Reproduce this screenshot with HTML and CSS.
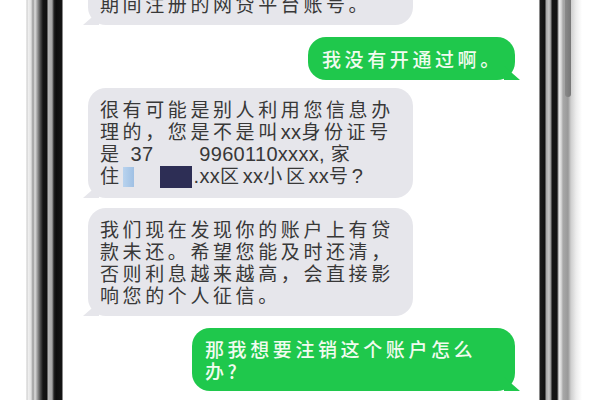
FILE: index.html
```html
<!DOCTYPE html>
<html lang="zh">
<head>
<meta charset="utf-8">
<title>聊天</title>
<link rel="stylesheet" href="styles.css">
</head>
<body>
<div class="phone">
  <div class="bezel-left"></div>
  <div class="screen">
    <div class="msg in first">期间注册的网贷平台账号。</div>
    <div class="msg out short">我没有开通过啊。</div>
    <div class="msg in">很有可能是别人利用您信息办<br>理的，您是不是叫<span class="lat">xx</span>身份证号<br>是 <span class="lat">37</span><span class="gap"></span><span class="lat">9960110xxxx, </span>家<br>住<span class="blue"></span><span class="gap2"></span><span class="navy"></span><span class="lat">.xx</span>区<span class="lat">xx</span>小区<span class="lat">xx</span>号<span class="lat">?</span></div>
    <div class="msg in">我们现在发现你的账户上有贷<br>款未还。希望您能及时还清，<br>否则利息越来越高，会直接影<br>响您的个人征信。</div>
    <div class="msg out wide">那我想要注销这个账户怎么<br>办?</div>
  </div>
  <div class="bezel-right"><div class="button"></div></div>
</div>
</body>
</html>
```
FILE: styles.css
```css
html, body {
  margin: 0;
  padding: 0;
  background: #fff;
}
body {
  width: 600px;
  height: 400px;
  overflow: hidden;
  font-family: "Noto Sans CJK SC", "Noto Sans", sans-serif;
}
.phone {
  display: flex;
  height: 400px;
}
.bezel-left {
  width: 63px;
  flex: none;
  background: linear-gradient(to right,
    #fff 0, #fff 26px, #c8c8c8 27px, #f0f0f0 28px, #e2e2e2 31px, #9a9a9a 33px,
    #dcdcdc 35px, #8a8a8a 38px, #555 40px, #151515 43px, #101010 47px,
    #b8b8b8 48px, #a5a5a5 52px, #202020 54px, #0c0c0c 56px, #151515 62px, #fff 63px);
}
.bezel-right {
  width: 62px;
  flex: none;
  position: relative;
  background: linear-gradient(to right,
    #fff 0, #fafafa 1px, #1a1a1a 2px, #0e0e0e 7px, #a0a0a0 8px, #c4c4c4 11px,
    #8a8a8a 13px, #141414 14px, #101010 19px, #e6e6e6 21px, #dcdcdc 23px,
    #a8a8a8 25px, #999 30px, #cfcfcf 33px, #ececec 38px, #fff 44px);
}
.button {
  position: absolute;
  left: 27px;
  top: 0;
  width: 6px;
  height: 97px;
  background: linear-gradient(to right, #8a8a8a, #777);
  border-radius: 0 0 3px 3px;
}
.screen {
  flex: 1;
  display: flex;
  flex-direction: column;
  background: #fff;
  overflow: hidden;
}
.msg {
  position: relative;
  box-sizing: border-box;
  font-size: 19px;
  line-height: 22px;
  letter-spacing: 3.6px;
  white-space: nowrap;
  border-radius: 18px;
}
.lat {
  font-family: "Liberation Sans", "DejaVu Sans", sans-serif;
  font-size: 20px;
  line-height: 1;
  letter-spacing: 0.3px;
}
.msg.in {
  align-self: flex-start;
  margin-left: 25px;
  width: 325px;
  padding: 10px 10px 10px 12px;
  background: #e6e6eb;
  color: #383838;
  margin-top: 10px;
}
.msg.in::after {
  content: "";
  position: absolute;
  left: -5px;
  bottom: 0;
  width: 16px;
  height: 14px;
  background: #e6e6eb;
  clip-path: polygon(0 100%, 100% 0, 100% 100%);
}
.msg.first {
  margin-top: -17px;
}
.msg.out {
  align-self: flex-end;
  margin-right: 23px;
  background: #1fc84c;
  color: #f1fbef;
  font-weight: 500;
}
.msg.out::after {
  content: "";
  position: absolute;
  right: -5px;
  bottom: 0;
  width: 16px;
  height: 14px;
  background: #1fc84c;
  clip-path: polygon(100% 100%, 0 0, 0 100%);
}
.msg.short {
  margin-top: 12px;
  width: 207px;
  padding: 11px 10px 10px 14px;
}
.msg.short + .msg.in {
  margin-top: 8px;
}
.msg.wide {
  margin-top: 12px;
  width: 323px;
  padding: 10px 10px 9px 13px;
}
.gap {
  display: inline-block;
  width: 46px;
}
.blue {
  display: inline-block;
  width: 11px;
  height: 20px;
  vertical-align: -4px;
  background: linear-gradient(to right, #b9d3ee, #9fc0e4);
}
.gap2 {
  display: inline-block;
  width: 26px;
}
.navy {
  display: inline-block;
  width: 32px;
  height: 22px;
  vertical-align: -5px;
  background: #2d2e55;
  margin-right: 2px;
}
```
